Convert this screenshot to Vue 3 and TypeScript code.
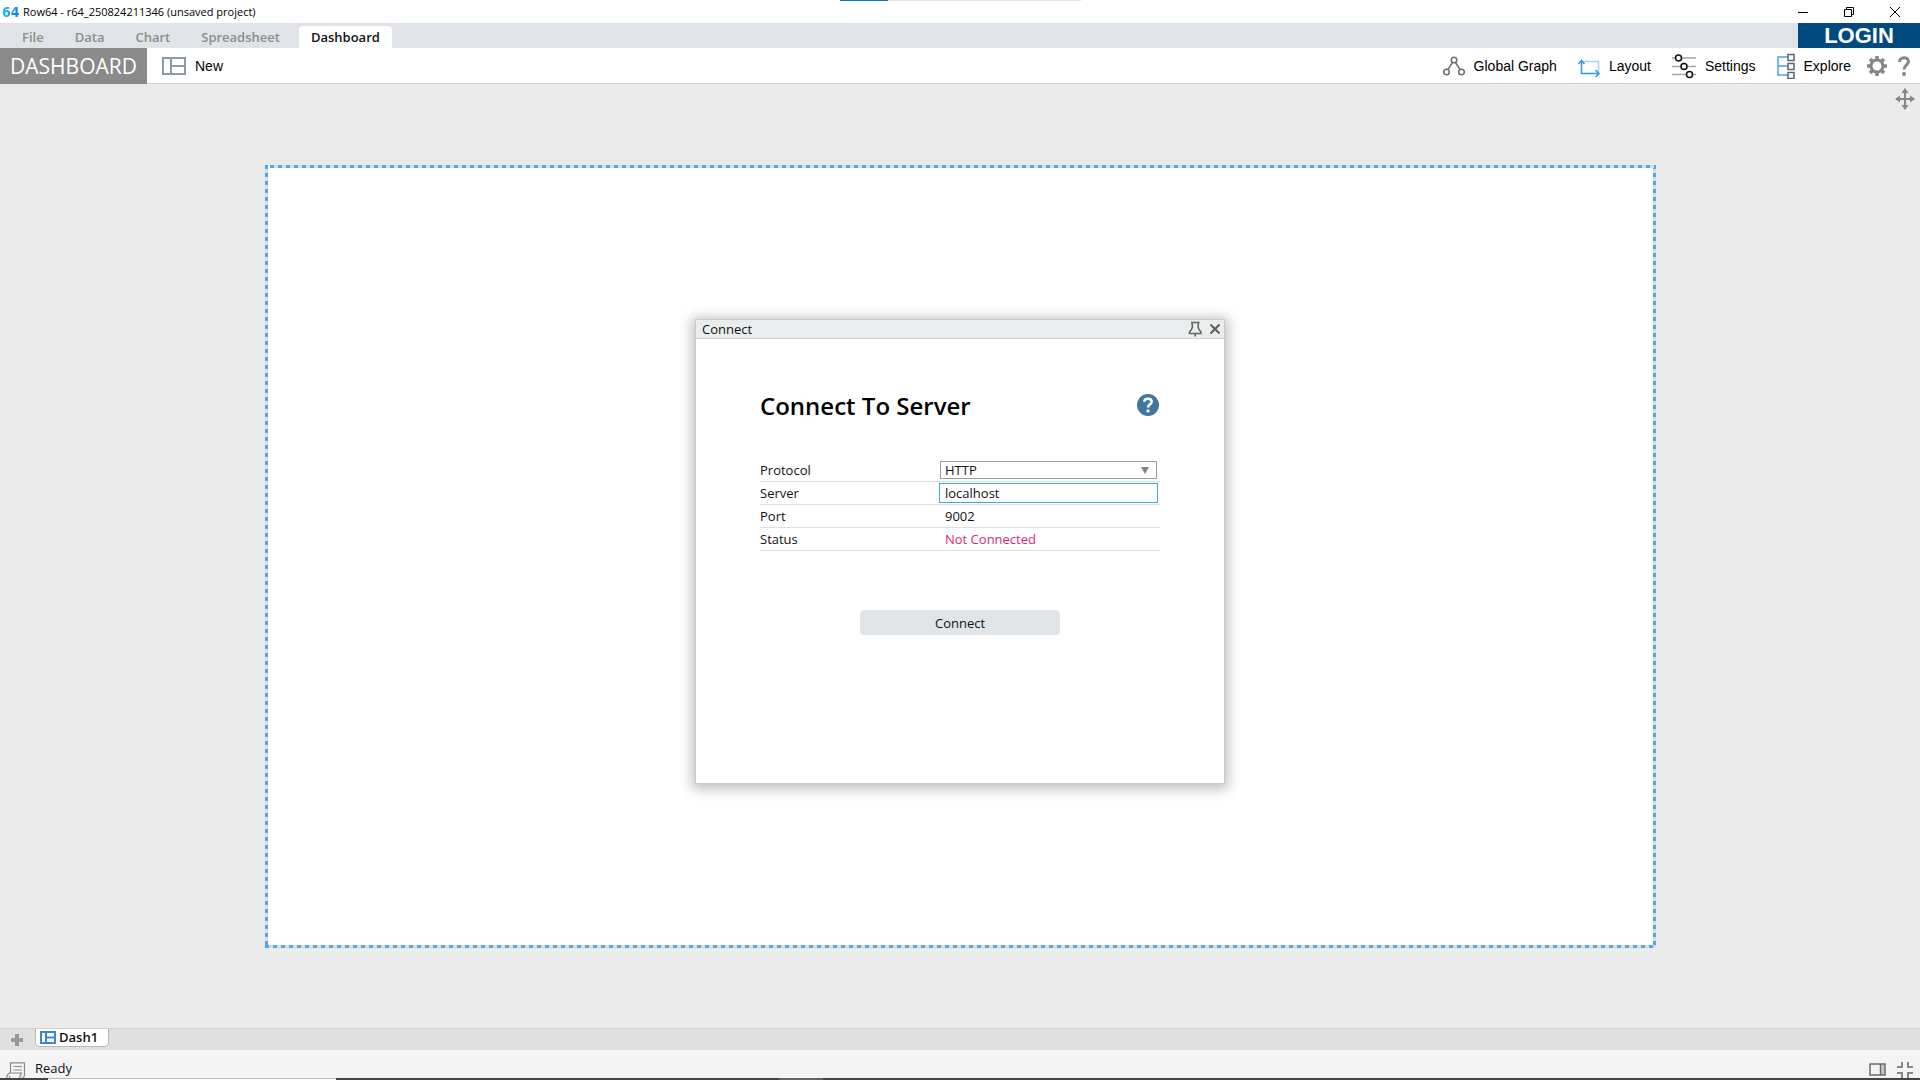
<script setup lang="ts">
import { ref } from 'vue'

const tabs: string[] = ['File', 'Data', 'Chart', 'Spreadsheet', 'Dashboard']
const activeTab = ref('Dashboard')
const protocol = ref('HTTP')
const server = ref('localhost')
const port = ref('9002')
const status = ref('Not Connected')
</script>

<template>
  <div class="app">
    <header class="titlebar">
      <span class="logo">64</span>
      <span class="title">Row64 - r64_250824211346 (unsaved project)</span>
      <div class="loading"><span class="loading-done"></span></div>
      <div class="window-controls">
        <button type="button" aria-label="Minimize">
          <svg width="12" height="12" viewBox="0 0 12 12"><path d="M1 6.500h10" /></svg>
        </button>
        <button type="button" aria-label="Restore">
          <svg width="12" height="12" viewBox="0 0 12 12"><path d="M1.500 3.500h7v7h-7zM3.500 3.500v-2h7v7h-2" /></svg>
        </button>
        <button type="button" aria-label="Close window">
          <svg width="12" height="12" viewBox="0 0 12 12"><path d="M1 1l10 10M11 1L1 11" /></svg>
        </button>
      </div>
    </header>

    <nav class="tabs">
      <button
        v-for="tab in tabs"
        :key="tab"
        type="button"
        class="tab"
        :class="{ active: tab === activeTab }"
        @click="activeTab = tab"
      >{{ tab }}</button>
      <button type="button" class="login">LOGIN</button>
    </nav>

    <div class="toolbar">
      <div class="mode">DASHBOARD</div>
      <button type="button" class="tool new">
        <svg width="24" height="18" viewBox="0 0 24 18" fill="none" stroke="#8a9da6" stroke-width="2">
          <path d="M1 1h22v16H1zM9 1v16M9 9H23" />
        </svg>
        New
      </button>
      <div class="tools">
        <button type="button" class="tool">
          <svg width="22" height="26" viewBox="0 0 22 26" fill="none" stroke="#6e6e6e" stroke-width="1.500">
            <circle cx="11" cy="7" r="2.800" />
            <circle cx="3.500" cy="19" r="2.800" />
            <circle cx="18.500" cy="19" r="2.800" />
            <path d="M9.500 9.500L5 16.500M12.500 9.500l4.500 7" />
          </svg>
          Global Graph
        </button>
        <button type="button" class="tool">
          <svg width="22" height="26" viewBox="0 0 22 26" fill="none" stroke-width="1.500">
            <path d="M5 8.500h15.500V20" stroke="#a9d4ee" />
            <path d="M3.500 8v12.500H21M0.500 11l3-3.500 3 3.500M17.500 17l3.500 3.500-3.500 3.500" stroke="#2f9bd8" />
          </svg>
          Layout
        </button>
        <button type="button" class="tool">
          <svg width="24" height="26" viewBox="0 0 24 26" fill="#fff" stroke-width="1.500">
            <path d="M0 5h24M0 13.500h24M0 21.500h24" stroke="#9aa9b0" />
            <g stroke="#111">
              <circle cx="6.500" cy="5" r="3" />
              <circle cx="12" cy="13.500" r="3" />
              <circle cx="17.500" cy="21.500" r="3" />
            </g>
          </svg>
          Settings
        </button>
        <button type="button" class="tool">
          <svg width="18" height="26" viewBox="0 0 18 26" fill="none" stroke-width="1.500">
            <path d="M11 4H1v18h10M1 13h10" stroke="#45a5de" />
            <path d="M11 1.500h6v6h-6zM11 10.500h6v6h-6zM11 19.500h6v6h-6z" stroke="#5b6773" />
          </svg>
          Explore
        </button>
        <button type="button" class="tool gear" aria-label="Preferences">
          <svg width="20" height="20" viewBox="0 0 20 20" fill="none" stroke="#868686">
            <circle cx="10" cy="10" r="6" stroke-width="3" />
            <path d="M10 0v3.500M10 16.500V20M0 10h3.500M16.500 10H20M3 3l2.500 2.500M14.500 14.500L17 17M17 3l-2.500 2.500M5.500 14.500L3 17" stroke-width="3.500" />
          </svg>
        </button>
        <button type="button" class="tool help" aria-label="Help">
          <svg width="12" height="20" viewBox="0 0 12 20" fill="none" stroke="#868686" stroke-width="3">
            <path d="M1.500 6C1.500 0.500 10.500 0.500 10.500 5.500C10.500 9 6 8.800 6 13.500" />
            <path d="M6 16.200v3.500" stroke-width="3.500" />
          </svg>
        </button>
      </div>
    </div>

    <main class="workspace">
      <button type="button" class="move" aria-label="Pan">
        <svg width="20" height="22" viewBox="0 0 20 22">
          <path d="M10 3v16M2 11h16" stroke="#868686" stroke-width="2" />
          <path d="M10 0l3.500 5h-7zM10 22l3.500-5h-7zM0 11l5-3.500v7zM20 11l-5-3.500v7z" fill="#868686" />
        </svg>
      </button>
      <section class="canvas"></section>

      <div class="dialog-layer">
        <form class="dialog" aria-label="Connect" @submit.prevent>
          <div class="dialog-title">
            <span>Connect</span>
            <button type="button" class="pin" aria-label="Pin">
              <svg width="14" height="16" viewBox="0 0 14 16" fill="none" stroke="#666" stroke-width="1.600">
                <path d="M3 1.500h8.500M4 1.500c0.800 4 0.800 6-2.500 9.500v1.500h11.500V11C9.700 7.500 9.700 5.500 10.500 1.500M7.200 12.500v3" />
              </svg>
            </button>
            <button type="button" class="close" aria-label="Close">
              <svg width="10" height="10" viewBox="0 0 10 10" stroke="#5c5c5c" stroke-width="2">
                <path d="M0.500 0.500l9 9M9.500 0.500l-9 9" />
              </svg>
            </button>
          </div>

          <div class="dialog-body">
            <div class="heading">
              <h1>Connect To Server</h1>
              <button type="button" aria-label="Connection help">
                <svg width="22" height="22" viewBox="0 0 22 22" fill="none" stroke="#fff" stroke-width="2.500">
                  <circle cx="11" cy="11" r="11" fill="#41769f" stroke="none" />
                  <path d="M7.300 7.800C7.300 3.800 14.700 3.800 14.700 7.800C14.700 10.500 11 10.300 11 13.500" />
                  <path d="M11 15.500v2.800" stroke-width="2.800" />
                </svg>
              </button>
            </div>

            <div class="row">
              <label for="protocol">Protocol</label>
              <div class="select-box">
                <select id="protocol" v-model="protocol">
                  <option>HTTP</option>
                  <option>HTTPS</option>
                </select>
                <svg width="8" height="7" viewBox="0 0 8 7"><path d="M0 0h8L4 7z" fill="#828282" /></svg>
              </div>
            </div>
            <div class="row">
              <label for="server">Server</label>
              <input id="server" v-model="server" class="focused" type="text" />
            </div>
            <div class="row">
              <label for="port">Port</label>
              <input id="port" v-model="port" type="text" />
            </div>
            <div class="row">
              <span class="label">Status</span>
              <output class="status">{{ status }}</output>
            </div>

            <button type="submit" class="connect">Connect</button>
          </div>
        </form>
      </div>
    </main>

    <div class="sheets">
      <button type="button" class="add" aria-label="Add dashboard">
        <svg width="12" height="12" viewBox="0 0 12 12"><path d="M6 0v12M0 6h12" stroke="#999" stroke-width="4" /></svg>
      </button>
      <button type="button" class="sheet">
        <svg width="16" height="13" viewBox="0 0 16 13" fill="none" stroke="#3d87cc" stroke-width="2">
          <path d="M1 1h14v11H1zM6 1v11M6 6.500h9" />
        </svg>
        Dash1
      </button>
    </div>

    <footer class="statusbar">
      <button type="button" aria-label="Log">
        <svg width="20" height="16" viewBox="0 0 20 16" fill="none" stroke="#8a8a8a" stroke-width="1.200">
          <path d="M4.500 11V0.800h14V13c0 1.500-1 2.500-2 2.500M7.500 4.500h8.500M7.500 8h8.500M14 16v-1.500c0-1.500.5-2 1.500-3.500H3.500C1.500 12 .8 13 .8 16M3.500 16c0-1 0-1.500.5-2" />
        </svg>
      </button>
      <span class="ready">Ready</span>
      <button type="button" class="panel" aria-label="Toggle side panel">
        <svg width="17" height="13" viewBox="0 0 17 13">
          <path d="M11 1h5v11h-5z" fill="#c9c9c9" />
          <path d="M1 1h15v11H1zM11.500 1v11" fill="none" stroke="#6b6b6b" stroke-width="1.500" />
        </svg>
      </button>
      <button type="button" aria-label="Exit full view">
        <svg width="16" height="16" viewBox="0 0 16 16" fill="none" stroke="#868686" stroke-width="2">
          <path d="M5 0v5H0M11 0v5h5M5 16v-5H0M11 16v-5h5" />
        </svg>
      </button>
    </footer>
    <div class="desktop-edge"><span class="edge-start"></span><span class="edge-window"></span><span class="edge-rest"></span><span class="edge-item"></span></div>
  </div>
</template>

<style>
body {
  margin: 0;
}
</style>

<style scoped>
.app {
  display: flex;
  flex-direction: column;
  min-height: 100vh;
  background: #fff;
  color: #111;
  font-family: "Open Sans", "Noto Sans", sans-serif;
  font-size: 13px;
}
button {
  display: flex;
  align-items: center;
  margin: 0;
  padding: 0;
  border: 0;
  background: none;
  color: inherit;
  font: inherit;
}
svg {
  display: block;
  flex: none;
}

.titlebar {
  position: relative;
  display: flex;
  align-items: center;
  height: 23px;
  padding-left: 2px;
}
.logo {
  width: 21px;
  font-family: "DejaVu Sans Condensed", "Open Sans", sans-serif;
  font-size: 14px;
  font-weight: 700;
  line-height: 22px;
  background: linear-gradient(100deg, #12c8ee, #1f5fee);
  background-clip: text;
  color: transparent;
}
.title {
  color: #000;
  font-size: 11px;
}
.loading {
  position: absolute;
  top: 0;
  left: calc(50% - 120px);
  width: 241px;
  height: 1px;
  background: #e5e5e5;
}
.loading-done {
  display: block;
  width: 20%;
  height: 1px;
  background: #0078d7;
}
.window-controls {
  display: flex;
  margin-left: auto;
  padding-right: 2px;
}
.window-controls button {
  justify-content: center;
  width: 46px;
  height: 21px;
}
.window-controls svg {
  fill: none;
  stroke: #000;
}

.tabs {
  display: flex;
  align-items: flex-end;
  height: 25px;
  padding-left: 7px;
  background: #e0e3e8;
}
.tab {
  height: 22px;
  padding: 0 16px 0 15px;
  color: #8c8c8c;
  font-weight: 600;
}
.tab.active {
  margin-left: 3px;
  padding: 0 12px;
  border-radius: 4px 4px 0 0;
  background: #fff;
  color: #111;
}
.login {
  justify-content: center;
  width: 122px;
  height: 25px;
  margin-left: auto;
  background: #004a80;
  color: #fff;
  font-family: "Liberation Sans", Arial, sans-serif;
  font-size: 22px;
  font-weight: 700;
}

.toolbar {
  display: flex;
  height: 35px;
  border-bottom: 1px solid #d0d0d0;
}
.mode {
  width: 147px;
  height: 36px;
  background: #8a8a8a;
  color: #fff;
  font-size: 21px;
  font-weight: 500;
  line-height: 36px;
  text-align: center;
}
.tool {
  gap: 9px;
  color: #000;
  font-family: "Liberation Sans", Arial, sans-serif;
  font-size: 14px;
}
.new {
  margin-left: 15px;
}
.tools {
  display: flex;
  align-items: center;
  gap: 21px;
  margin-left: auto;
  padding-right: 10px;
}
.gear {
  margin-left: -5px;
}
.help {
  margin-left: -10px;
}

.workspace {
  position: relative;
  display: flex;
  flex: 1;
  padding: 81px 264px 80px 265px;
  background: #ebebeb;
}
.move {
  position: absolute;
  top: 4px;
  right: 5px;
}
.canvas {
  --dash: #4da6f7 0 4px, #dcdcdc 4px 8px;
  flex: 1;
  background:
    repeating-linear-gradient(90deg, var(--dash)) 5px 0 / 100% 3px no-repeat,
    repeating-linear-gradient(90deg, var(--dash)) 0 100% / 100% 3px no-repeat,
    repeating-linear-gradient(180deg, var(--dash)) 0 0 / 3px 100% no-repeat,
    repeating-linear-gradient(180deg, var(--dash)) 100% 0 / 3px 100% no-repeat,
    #fff;
}

.dialog-layer {
  position: absolute;
  inset: 0 0 9px;
  display: grid;
  place-items: center;
}
.dialog {
  box-sizing: border-box;
  width: 530px;
  min-height: 465px;
  border: 1px solid #c8c8c8;
  background: #fff;
  box-shadow: 0 2px 12px 3px rgba(0, 0, 0, 0.26);
}
.dialog-title {
  display: flex;
  align-items: center;
  height: 18px;
  padding: 0 4px 0 6px;
  border-bottom: 1px solid #d4d4d4;
  background: #e9edee;
}
.pin {
  margin-left: auto;
}
.close {
  margin-left: 8px;
}
.dialog-body {
  display: flex;
  flex-direction: column;
  padding: 50px 64px;
}
.heading {
  display: flex;
  align-items: center;
  justify-content: space-between;
  height: 32px;
  margin-bottom: 38px;
  padding-right: 1px;
}
h1 {
  margin: 0;
  color: #000;
  font-size: 24px;
  font-weight: 600;
}
.row {
  display: flex;
  align-items: center;
  height: 22px;
  border-bottom: 1px solid #dedede;
}
.row label,
.label {
  width: 179px;
}
.row input,
.select-box {
  box-sizing: border-box;
  width: 219px;
  height: 20px;
  padding: 0 5px;
  border: 1px solid transparent;
  background: #fff;
  color: #111;
  font: inherit;
  outline: none;
}
.row input.focused {
  border-color: #3aa9dc;
}
.select-box {
  display: flex;
  align-items: center;
  width: 217px;
  height: 18px;
  margin-left: 1px;
  padding: 0 7px 0 4px;
  border-color: #9c9c9c;
}
select {
  flex: 1;
  height: 16px;
  padding: 0;
  border: 0;
  appearance: none;
  background: none;
  color: inherit;
  font: inherit;
  line-height: 16px;
}
.status {
  padding-left: 6px;
  color: #dc1f72;
}
.connect {
  align-self: center;
  justify-content: center;
  width: 200px;
  height: 25px;
  margin-top: 59px;
  border-radius: 4px;
  background: #e1e5e8;
}

.sheets {
  display: flex;
  height: 21px;
  padding-left: 11px;
  border-top: 1px solid #d2d2d2;
  background: #e0e0e0;
}
.sheet {
  gap: 3px;
  height: 18px;
  margin-left: 12px;
  padding: 0 10px 1px 4px;
  border: 1px solid #bababa;
  border-top: 0;
  border-radius: 0 0 5px 5px;
  background: #fff;
  font-weight: 600;
}
.statusbar {
  display: flex;
  align-items: flex-end;
  height: 28px;
  padding: 0 7px 0 6px;
  background: #f4f4f4;
}
.ready {
  margin-left: 9px;
  line-height: 20px;
}
.panel {
  margin: 0 11px 2px auto;
}
.desktop-edge {
  display: flex;
  position: relative;
  height: 2px;
}
.edge-start,
.edge-rest {
  width: 48px;
  background: #444;
}
.edge-window {
  width: 288px;
  border-top: 1px solid #b8b8b8;
}
.edge-rest {
  flex: 1;
}
.edge-item {
  position: absolute;
  left: 779px;
  width: 44px;
  height: 2px;
  background: #666;
}
</style>
